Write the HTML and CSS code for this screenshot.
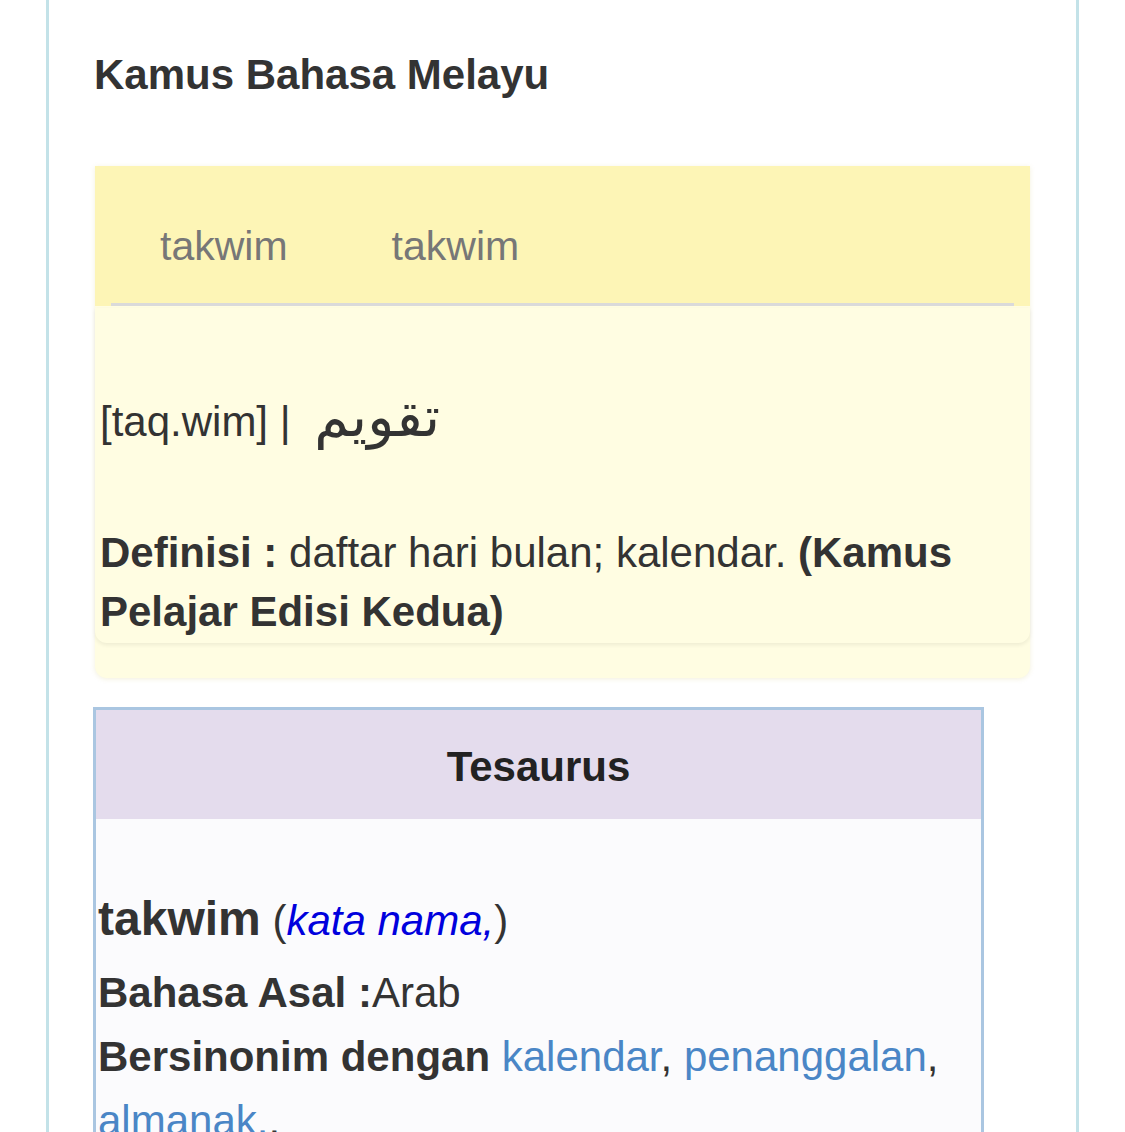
FILE: index.html
```html
<!DOCTYPE html>
<html lang="ms">
<head>
    <meta charset="UTF-8">
    <meta name="viewport" content="width=device-width, initial-scale=1.0">
    <title>Kamus Bahasa Melayu - takwim</title>
    <link rel="stylesheet" href="styles.css">
</head>
<body>
    <div class="page">
        <h1 class="site-title">Kamus Bahasa Melayu</h1>

        <section class="entry-card">
            <div class="entry-tabs">
                <ul class="tab-list">
                    <li class="tab">takwim</li>
                    <li class="tab">takwim</li>
                </ul>
            </div>
            <div class="entry-panel">
                <p class="pron">[taq.wim] | <span class="jawi" lang="ar" dir="rtl">تقويم</span></p>
                <p class="definisi"><b>Definisi :</b> daftar hari bulan; kalendar. <b>(Kamus Pelajar Edisi Kedua)</b></p>
            </div>
        </section>

        <section class="tesaurus">
            <h2 class="tesaurus-head">Tesaurus</h2>
            <div class="tesaurus-body">
                <p class="kata"><b class="lema">takwim</b> (<i class="jenis">kata nama,</i>)</p>
                <p class="row"><b>Bahasa Asal :</b>Arab</p>
                <p class="row"><b>Bersinonim dengan</b> <a href="#">kalendar</a>, <a href="#">penanggalan</a>, <a href="#">almanak.</a>,</p>
            </div>
        </section>
    </div>
</body>
</html>
```

FILE: styles.css
```css
/* Halaman kamus */
body {
    margin: 0;
    padding: 0;
    font-family: "Liberation Sans", Arial, sans-serif;
    color: #333;
    background-color: #fff;
}

.page {
    margin: 0 46px;
    min-height: 100vh;
    padding: 0 46px;
    border-left: 3px solid #c3e2e8;
    border-right: 3px solid #c3e2e8;
    overflow: hidden;
}

.site-title {
    margin: 51px 0 0 -1px;
    font-size: 42px;
    line-height: 48px;
    color: #333;
}

/* kad entri kuning */
.entry-card {
    margin-top: 67px;
    background-color: #fffde2;
    border-radius: 0 0 12px 12px;
    box-shadow: 0 1px 5px rgba(190, 170, 60, 0.18);
    padding-bottom: 35px;
}

.entry-tabs {
    background-color: #fdf5b6;
    padding: 0 16px;
}

.tab-list {
    display: flex;
    list-style: none;
    margin: 0;
    padding: 56px 0 0 0;
    height: 81px;
    border-bottom: 3px solid #dadada;
}

.tab {
    padding: 0 52px;
    font-size: 41px;
    line-height: 48px;
    color: #777;
}

.tab:first-child {
    padding-left: 49px;
}

.entry-panel {
    margin-top: 2px;
    padding: 0 5px 2px;
    background-color: #fffde2;
    border-radius: 0 0 12px 12px;
    box-shadow: 0 2px 4px rgba(0, 0, 0, 0.07);
}

.pron {
    margin: 0;
    padding-top: 74px;
    font-size: 42px;
    line-height: 80px;
    color: #333;
}

.jawi {
    margin-left: 12px;
    font-family: "DejaVu Sans", sans-serif;
    font-size: 56px;
    line-height: 1;
}

.definisi {
    margin: 61px 0 0;
    font-size: 42px;
    line-height: 59px;
}

/* kotak tesaurus */
.tesaurus {
    margin: 29px 0 0 -2px;
    width: 885px;
    border: 3px solid #aac6e1;
    border-bottom: none;
    background-color: #fbfbfd;
}

.tesaurus-head {
    margin: 0;
    height: 109px;
    padding-top: 2px;
    line-height: 109px;
    text-align: center;
    font-size: 42px;
    color: #222;
    background-color: #e4dced;
    box-sizing: border-box;
}

.tesaurus-body {
    padding: 65px 2px 0;
}

.kata {
    margin: 0;
    font-size: 42px;
    line-height: 70px;
}

.lema {
    font-size: 48px;
}

.jenis {
    color: #0000dd;
}

.row {
    margin: 5px 0 0;
    font-size: 42px;
    line-height: 64px;
}

.row + .row {
    margin-top: 0;
}

.row a {
    color: #4a86c6;
    text-decoration: none;
}
```
